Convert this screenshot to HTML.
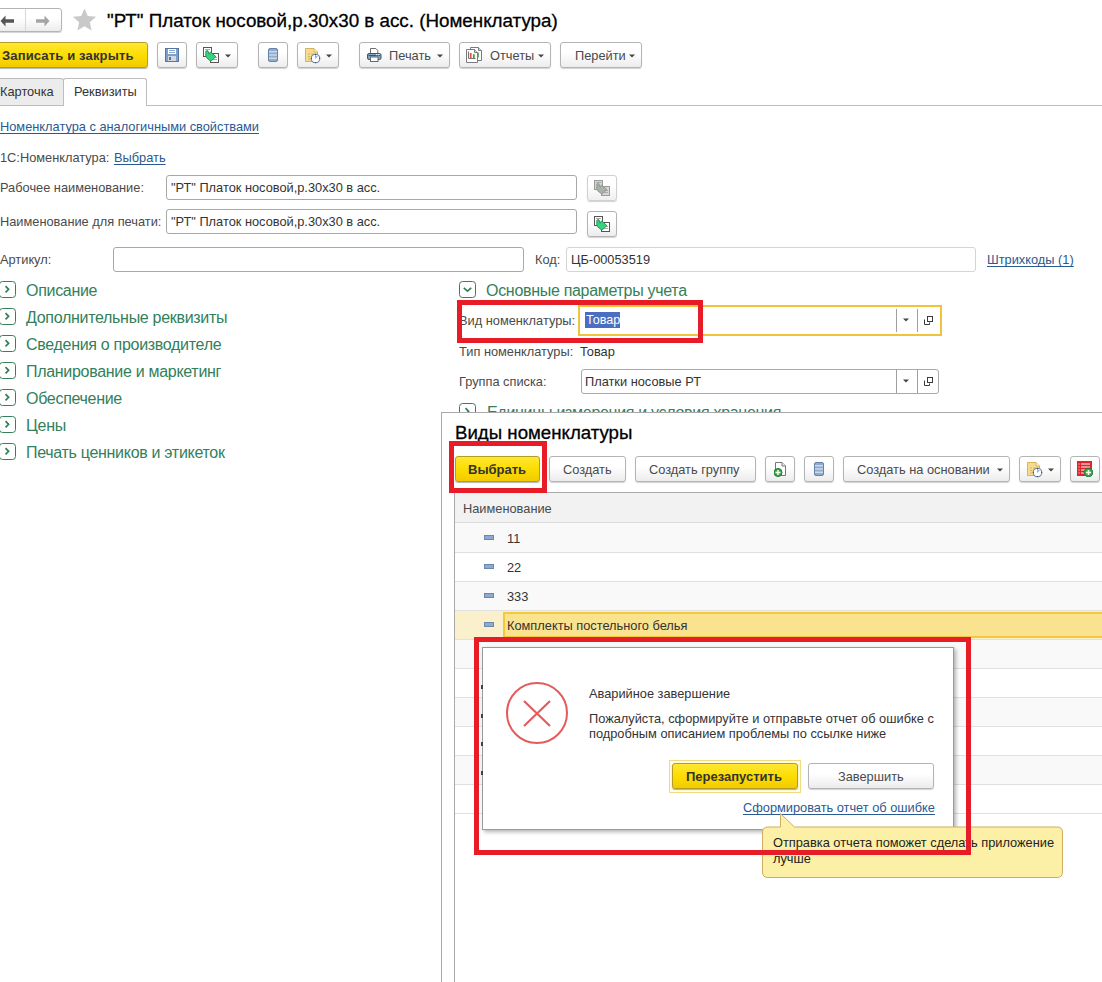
<!DOCTYPE html>
<html><head><meta charset="utf-8"><style>
html,body{margin:0;padding:0;width:1102px;height:982px;overflow:hidden;background:#fff;position:relative;font-family:"Liberation Sans", sans-serif;}
body>div,body>svg{position:absolute;}
.t{white-space:nowrap;}
</style></head><body>
<div style="left:-4px;top:8px;width:66px;height:24px;border:1px solid #b4b4b4;border-radius:3px;background:linear-gradient(#ffffff 40%,#ececec);box-shadow:0 1px 1px rgba(0,0,0,.18);box-sizing:border-box;"></div>
<div style="left:25px;top:9px;width:1px;height:22px;background:#d8d8d8;"></div>
<svg style="left:0px;top:15px" width="15" height="12" viewBox="0 0 15 12"><path d="M5.5 0.5L0.5 6L5.5 11.5V7.8H14V4.2H5.5Z" fill="#555"/></svg>
<svg style="left:36px;top:15px" width="15" height="12" viewBox="0 0 15 12"><path d="M8.5 0.5L13.5 6L8.5 11.5V7.8H0V4.2H8.5Z" fill="#a5a5a5"/></svg>
<svg style="left:73px;top:8px" width="24" height="23" viewBox="0 0 24 23"><path d="M11.50 0.40 L14.79 8.07 L23.10 8.83 L16.83 14.33 L18.67 22.47 L11.50 18.20 L4.33 22.47 L6.17 14.33 L-0.10 8.83 L8.21 8.07Z" fill="#c9c9c9"/></svg>
<div class="t" style="left:107px;top:12.09px;font-size:18.8px;line-height:18.8px;color:#000;font-weight:normal;-webkit-text-stroke:0.3px #000;">"РТ" Платок носовой,р.30х30 в асс. (Номенклатура)</div>
<div style="left:-4px;top:42px;width:152px;height:26px;border:1px solid #b59c22;border-radius:3px;background:linear-gradient(#ffe735,#fddd00 50%,#f2cb00);box-shadow:0 1px 1px rgba(0,0,0,.3);box-sizing:border-box;"></div>
<div class="t" style="left:2px;top:49.00px;font-size:13px;line-height:13px;color:#333;font-weight:bold;letter-spacing:0.15px;">Записать и закрыть</div>
<div style="left:157px;top:42px;width:30px;height:26px;border:1px solid #b4b4b4;border-radius:3px;background:linear-gradient(#ffffff 40%,#ececec);box-shadow:0 1px 1px rgba(0,0,0,.18);box-sizing:border-box;"></div>
<div style="left:196px;top:42px;width:42px;height:26px;border:1px solid #b4b4b4;border-radius:3px;background:linear-gradient(#ffffff 40%,#ececec);box-shadow:0 1px 1px rgba(0,0,0,.18);box-sizing:border-box;"></div>
<div style="left:258px;top:42px;width:30px;height:26px;border:1px solid #b4b4b4;border-radius:3px;background:linear-gradient(#ffffff 40%,#ececec);box-shadow:0 1px 1px rgba(0,0,0,.18);box-sizing:border-box;"></div>
<div style="left:297px;top:42px;width:42px;height:26px;border:1px solid #b4b4b4;border-radius:3px;background:linear-gradient(#ffffff 40%,#ececec);box-shadow:0 1px 1px rgba(0,0,0,.18);box-sizing:border-box;"></div>
<div style="left:359px;top:42px;width:91px;height:26px;border:1px solid #b4b4b4;border-radius:3px;background:linear-gradient(#ffffff 40%,#ececec);box-shadow:0 1px 1px rgba(0,0,0,.18);box-sizing:border-box;"></div>
<div style="left:459px;top:42px;width:92px;height:26px;border:1px solid #b4b4b4;border-radius:3px;background:linear-gradient(#ffffff 40%,#ececec);box-shadow:0 1px 1px rgba(0,0,0,.18);box-sizing:border-box;"></div>
<div style="left:560px;top:42px;width:82px;height:26px;border:1px solid #b4b4b4;border-radius:3px;background:linear-gradient(#ffffff 40%,#ececec);box-shadow:0 1px 1px rgba(0,0,0,.18);box-sizing:border-box;"></div>
<svg style="left:165px;top:48px" width="14" height="14" viewBox="0 0 14 14"><rect x="0.5" y="0.5" width="13" height="13" fill="#7d9fcd" stroke="#56769f"/><rect x="3" y="1" width="8" height="5" fill="#fff"/><path d="M4 2.5H10M4 4.5H10" stroke="#8aa8d0"/><rect x="3" y="8" width="8" height="5" fill="#d4d8de"/><rect x="4" y="9" width="2" height="3" fill="#56769f"/></svg>
<svg style="left:203px;top:47px" width="16" height="16" viewBox="0 0 16 16"><rect x="0.5" y="0.5" width="8" height="9" fill="#fff" stroke="#555"/><rect x="7.5" y="6.5" width="8" height="9" fill="#fff" stroke="#555"/><path d="M2 2.5H7M9 10.5H14M9 12.5H14" stroke="#aaa"/><path d="M2.8 4.2 Q3.5 3.3 4.9 3.8 L6.1 7.2 Q6.6 5.2 7.8 5.1 L12.9 9.6 L7.8 14.2 L3.4 10.6 Q2.6 9.6 2.8 8Z" fill="#38d27f" stroke="#1e8f4a" stroke-width="0.9"/></svg>
<svg style="left:225px;top:54px" width="6" height="4" viewBox="0 0 6 4"><path d="M0 0.5H6L3 3.5Z" fill="#444"/></svg>
<svg style="left:268px;top:48px" width="10" height="14" viewBox="0 0 10 14"><rect x="0.5" y="0.5" width="9" height="13" rx="1.5" fill="#8fabd0" stroke="#6782a8"/><path d="M1 3.8H9M1 7H9M1 10.2H9" stroke="#e8eef7" stroke-width="1"/></svg>
<svg style="left:305px;top:48px" width="16" height="16" viewBox="0 0 16 16"><path d="M0.5 0.5H9L12.5 4V13.5H0.5Z" fill="#f6dc90" stroke="#d6b45c"/><path d="M9 0.5V4H12.5" fill="#fff3cc" stroke="#d6b45c"/><path d="M3 6H5M6 6H9M3 8.5H5M3 11H5" stroke="#c9ab60" stroke-width="0.8"/><circle cx="10.5" cy="10.5" r="4.3" fill="#fff" stroke="#6a82a6" stroke-width="1.1"/><path d="M10.5 10.5V7.2L13 8.5Z" fill="#9fb4d6"/><path d="M10.5 10.5V7" stroke="#8aa0c4" stroke-width="0.8"/><circle cx="10.5" cy="6.4" r=".6" fill="#8a2a3a"/><circle cx="6.4" cy="10.5" r=".6" fill="#8a2a3a"/><circle cx="14.6" cy="10.5" r=".6" fill="#8a2a3a"/><circle cx="10.5" cy="14.6" r=".6" fill="#8a2a3a"/></svg>
<svg style="left:326px;top:54px" width="6" height="4" viewBox="0 0 6 4"><path d="M0 0.5H6L3 3.5Z" fill="#444"/></svg>
<svg style="left:367px;top:48px" width="15" height="15" viewBox="0 0 15 15"><path d="M3.5 0.5H8.8L10.8 2.5V5.5H3.5Z" fill="#fff" stroke="#6a6a6a"/><rect x="0.5" y="5.5" width="13.5" height="6" rx="1.5" fill="#7ea3c9" stroke="#3b5672"/><path d="M1.5 7.5H13" stroke="#3b5672"/><rect x="9" y="6.2" width="1.3" height="1" fill="#fff"/><rect x="11" y="6.2" width="1.3" height="1" fill="#fff"/><rect x="3.5" y="9" width="7.5" height="4.5" fill="#fff" stroke="#6a6a6a"/></svg>
<div class="t" style="left:389px;top:50.16px;font-size:12.8px;line-height:12.8px;color:#4a4a4a;font-weight:normal;">Печать</div>
<svg style="left:437px;top:54px" width="6" height="4" viewBox="0 0 6 4"><path d="M0 0.5H6L3 3.5Z" fill="#444"/></svg>
<svg style="left:466px;top:47px" width="17" height="17" viewBox="0 0 17 17"><path d="M4.5 0.5H12.5L15.5 3.5V13.5H4.5Z" fill="#fff" stroke="#7a7a80"/><path d="M12.5 0.5V3.5H15.5" fill="#ddd" stroke="#7a7a80"/><rect x="11.2" y="5.5" width="1.5" height="5" fill="#3f7f4f"/><path d="M0.5 2.5H8.5L11.5 5.5V15.5H0.5Z" fill="#fff" stroke="#7a7a80"/><path d="M8.5 2.5V5.5H11.5" fill="#ddd" stroke="#7a7a80"/><path d="M2.5 4.5V11.5H9.5" fill="none" stroke="#666" stroke-width="0.9"/><rect x="3.8" y="6" width="1.8" height="5.3" fill="#d9583a"/><rect x="6.9" y="7.2" width="1.8" height="4.1" fill="#4f9a4f"/></svg>
<div class="t" style="left:490px;top:50.16px;font-size:12.8px;line-height:12.8px;color:#4a4a4a;font-weight:normal;">Отчеты</div>
<svg style="left:538px;top:54px" width="6" height="4" viewBox="0 0 6 4"><path d="M0 0.5H6L3 3.5Z" fill="#444"/></svg>
<div class="t" style="left:575px;top:50.16px;font-size:12.8px;line-height:12.8px;color:#4a4a4a;font-weight:normal;">Перейти</div>
<svg style="left:629px;top:54px" width="6" height="4" viewBox="0 0 6 4"><path d="M0 0.5H6L3 3.5Z" fill="#444"/></svg>
<div style="left:-4px;top:78px;width:68px;height:28px;background:#ececec;border:1px solid #bdbdbd;border-bottom:none;border-radius:3px 3px 0 0;box-sizing:border-box;"></div>
<div style="left:63px;top:78px;width:84px;height:28px;background:#fff;border:1px solid #bdbdbd;border-bottom:none;border-radius:3px 3px 0 0;box-sizing:border-box;"></div>
<div style="left:-4px;top:105px;width:68px;height:1px;background:#bdbdbd;"></div>
<div style="left:146px;top:105px;width:956px;height:1px;background:#bdbdbd;"></div>
<div class="t" style="left:0px;top:86.16px;font-size:12.8px;line-height:12.8px;color:#333;font-weight:normal;">Карточка</div>
<div class="t" style="left:74px;top:86.16px;font-size:12.8px;line-height:12.8px;color:#333;font-weight:normal;">Реквизиты</div>
<div class="t" style="left:0px;top:121.16px;font-size:12.8px;line-height:12.8px;color:#2a5a91;font-weight:normal;text-decoration:underline;text-underline-offset:2px;">Номенклатура с аналогичными свойствами</div>
<div class="t" style="left:0px;top:152.16px;font-size:12.8px;line-height:12.8px;color:#4a4a4a;font-weight:normal;">1С:Номенклатура:</div>
<div class="t" style="left:114px;top:152.16px;font-size:12.8px;line-height:12.8px;color:#2a5a91;font-weight:normal;text-decoration:underline;text-underline-offset:2px;">Выбрать</div>
<div class="t" style="left:0px;top:182.16px;font-size:12.8px;line-height:12.8px;color:#4a4a4a;font-weight:normal;">Рабочее наименование:</div>
<div class="t" style="left:0px;top:216.16px;font-size:12.8px;line-height:12.8px;color:#4a4a4a;font-weight:normal;">Наименование для печати:</div>
<div class="t" style="left:0px;top:254.16px;font-size:12.8px;line-height:12.8px;color:#4a4a4a;font-weight:normal;">Артикул:</div>
<div style="left:166px;top:175px;width:411px;height:25px;border:1px solid #a8a8a8;border-radius:3px;background:#fff;box-sizing:border-box;"></div>
<div style="left:166px;top:209px;width:411px;height:25px;border:1px solid #a8a8a8;border-radius:3px;background:#fff;box-sizing:border-box;"></div>
<div class="t" style="left:171px;top:182.16px;font-size:12.8px;line-height:12.8px;color:#333;font-weight:normal;">"РТ" Платок носовой,р.30х30 в асс.</div>
<div class="t" style="left:171px;top:216.16px;font-size:12.8px;line-height:12.8px;color:#333;font-weight:normal;">"РТ" Платок носовой,р.30х30 в асс.</div>
<div style="left:587px;top:175px;width:30px;height:26px;border:1px solid #d0d0d0;border-radius:3px;background:linear-gradient(#ffffff 40%,#efefef);box-shadow:0 1px 1px rgba(0,0,0,.18);box-sizing:border-box;"></div>
<svg style="left:594px;top:180px" width="16" height="16" viewBox="0 0 16 16"><rect x="0.5" y="0.5" width="8" height="9" fill="#d6d6d6" stroke="#9a9a9a"/><rect x="7.5" y="6.5" width="8" height="9" fill="#d6d6d6" stroke="#9a9a9a"/><path d="M2 2.5H7M9 10.5H14M9 12.5H14" stroke="#aaa"/><path d="M2.8 4.2 Q3.5 3.3 4.9 3.8 L6.1 7.2 Q6.6 5.2 7.8 5.1 L12.9 9.6 L7.8 14.2 L3.4 10.6 Q2.6 9.6 2.8 8Z" fill="#a9b1ab" stroke="#8a948c" stroke-width="0.9"/></svg>
<div style="left:587px;top:211px;width:30px;height:26px;border:1px solid #b4b4b4;border-radius:3px;background:linear-gradient(#ffffff 40%,#ececec);box-shadow:0 1px 1px rgba(0,0,0,.18);box-sizing:border-box;"></div>
<svg style="left:594px;top:216px" width="16" height="16" viewBox="0 0 16 16"><rect x="0.5" y="0.5" width="8" height="9" fill="#fff" stroke="#555"/><rect x="7.5" y="6.5" width="8" height="9" fill="#fff" stroke="#555"/><path d="M2 2.5H7M9 10.5H14M9 12.5H14" stroke="#aaa"/><path d="M2.8 4.2 Q3.5 3.3 4.9 3.8 L6.1 7.2 Q6.6 5.2 7.8 5.1 L12.9 9.6 L7.8 14.2 L3.4 10.6 Q2.6 9.6 2.8 8Z" fill="#38d27f" stroke="#1e8f4a" stroke-width="0.9"/></svg>
<div style="left:113px;top:247px;width:411px;height:25px;border:1px solid #a8a8a8;border-radius:3px;background:#fff;box-sizing:border-box;"></div>
<div class="t" style="left:535px;top:254.16px;font-size:12.8px;line-height:12.8px;color:#4a4a4a;font-weight:normal;">Код:</div>
<div style="left:566px;top:247px;width:410px;height:25px;border:1px solid #d4d4d4;border-radius:3px;background:#fff;box-sizing:border-box;"></div>
<div class="t" style="left:571px;top:254.16px;font-size:12.8px;line-height:12.8px;color:#333;font-weight:normal;">ЦБ-00053519</div>
<div class="t" style="left:987px;top:254.16px;font-size:12.8px;line-height:12.8px;color:#2a5a91;font-weight:normal;text-decoration:underline;text-underline-offset:2px;">Штрихкоды (1)</div>
<svg style="left:-1px;top:281px" width="17" height="17" viewBox="0 0 17 17"><rect x="0.5" y="0.5" width="16" height="16" rx="3" fill="none" stroke="#33805a"/><path d="M6.5 5.2L9.6 8.3L6.5 11.4" fill="none" stroke="#33805a" stroke-width="1.7"/></svg>
<div class="t" style="left:26px;top:283.46px;font-size:16px;line-height:16px;color:#33805a;font-weight:normal;letter-spacing:-0.3px;">Описание</div>
<svg style="left:-1px;top:308px" width="17" height="17" viewBox="0 0 17 17"><rect x="0.5" y="0.5" width="16" height="16" rx="3" fill="none" stroke="#33805a"/><path d="M6.5 5.2L9.6 8.3L6.5 11.4" fill="none" stroke="#33805a" stroke-width="1.7"/></svg>
<div class="t" style="left:26px;top:310.46px;font-size:16px;line-height:16px;color:#33805a;font-weight:normal;letter-spacing:-0.3px;">Дополнительные реквизиты</div>
<svg style="left:-1px;top:335px" width="17" height="17" viewBox="0 0 17 17"><rect x="0.5" y="0.5" width="16" height="16" rx="3" fill="none" stroke="#33805a"/><path d="M6.5 5.2L9.6 8.3L6.5 11.4" fill="none" stroke="#33805a" stroke-width="1.7"/></svg>
<div class="t" style="left:26px;top:337.46px;font-size:16px;line-height:16px;color:#33805a;font-weight:normal;letter-spacing:-0.3px;">Сведения о производителе</div>
<svg style="left:-1px;top:362px" width="17" height="17" viewBox="0 0 17 17"><rect x="0.5" y="0.5" width="16" height="16" rx="3" fill="none" stroke="#33805a"/><path d="M6.5 5.2L9.6 8.3L6.5 11.4" fill="none" stroke="#33805a" stroke-width="1.7"/></svg>
<div class="t" style="left:26px;top:364.46px;font-size:16px;line-height:16px;color:#33805a;font-weight:normal;letter-spacing:-0.3px;">Планирование и маркетинг</div>
<svg style="left:-1px;top:389px" width="17" height="17" viewBox="0 0 17 17"><rect x="0.5" y="0.5" width="16" height="16" rx="3" fill="none" stroke="#33805a"/><path d="M6.5 5.2L9.6 8.3L6.5 11.4" fill="none" stroke="#33805a" stroke-width="1.7"/></svg>
<div class="t" style="left:26px;top:391.46px;font-size:16px;line-height:16px;color:#33805a;font-weight:normal;letter-spacing:-0.3px;">Обеспечение</div>
<svg style="left:-1px;top:416px" width="17" height="17" viewBox="0 0 17 17"><rect x="0.5" y="0.5" width="16" height="16" rx="3" fill="none" stroke="#33805a"/><path d="M6.5 5.2L9.6 8.3L6.5 11.4" fill="none" stroke="#33805a" stroke-width="1.7"/></svg>
<div class="t" style="left:26px;top:418.46px;font-size:16px;line-height:16px;color:#33805a;font-weight:normal;letter-spacing:-0.3px;">Цены</div>
<svg style="left:-1px;top:443px" width="17" height="17" viewBox="0 0 17 17"><rect x="0.5" y="0.5" width="16" height="16" rx="3" fill="none" stroke="#33805a"/><path d="M6.5 5.2L9.6 8.3L6.5 11.4" fill="none" stroke="#33805a" stroke-width="1.7"/></svg>
<div class="t" style="left:26px;top:445.46px;font-size:16px;line-height:16px;color:#33805a;font-weight:normal;letter-spacing:-0.3px;">Печать ценников и этикеток</div>
<svg style="left:459px;top:281px" width="17" height="17" viewBox="0 0 17 17"><rect x="0.5" y="0.5" width="16" height="16" rx="3" fill="none" stroke="#33805a"/><path d="M4.8 6.8L8.5 10.2L12.2 6.8" fill="none" stroke="#33805a" stroke-width="1.7"/></svg>
<div class="t" style="left:486px;top:283.46px;font-size:16px;line-height:16px;color:#33805a;font-weight:normal;letter-spacing:-0.3px;">Основные параметры учета</div>
<div class="t" style="left:459px;top:315.16px;font-size:12.8px;line-height:12.8px;color:#4a4a4a;font-weight:normal;">Вид номенклатуры:</div>
<div style="left:578px;top:305px;width:364px;height:31px;border:2px solid #f0c43a;background:#fff;box-sizing:border-box;"></div>
<div style="left:585px;top:312px;width:35px;height:16px;background:#4a6ec0;"></div>
<div class="t" style="left:586px;top:314.33px;font-size:12.6px;line-height:12.6px;color:#fff;font-weight:normal;">Товар</div>
<div style="left:896px;top:309px;width:1px;height:23px;background:#a0a0a0;"></div>
<div style="left:917px;top:309px;width:1px;height:23px;background:#a0a0a0;"></div>
<svg style="left:903px;top:318px" width="6" height="4" viewBox="0 0 6 4"><path d="M0 0.5H6L3 3.5Z" fill="#444"/></svg>
<svg style="left:924px;top:316px" width="10" height="10" viewBox="0 0 10 10"><path d="M0.5 3.5V8.5H5.5V6.5" fill="none" stroke="#3a3a3a"/><rect x="3.5" y="0.5" width="5" height="5" fill="#fff" stroke="#3a3a3a"/></svg>
<div class="t" style="left:459px;top:346.16px;font-size:12.8px;line-height:12.8px;color:#4a4a4a;font-weight:normal;">Тип номенклатуры:</div>
<div class="t" style="left:580px;top:346.16px;font-size:12.8px;line-height:12.8px;color:#333;font-weight:normal;">Товар</div>
<div class="t" style="left:459px;top:376.16px;font-size:12.8px;line-height:12.8px;color:#4a4a4a;font-weight:normal;">Группа списка:</div>
<div style="left:581px;top:369px;width:358px;height:25px;border:1px solid #a8a8a8;border-radius:3px;background:#fff;box-sizing:border-box;"></div>
<div style="left:896px;top:370px;width:1px;height:23px;background:#a0a0a0;"></div>
<div style="left:917px;top:370px;width:1px;height:23px;background:#a0a0a0;"></div>
<svg style="left:903px;top:379px" width="6" height="4" viewBox="0 0 6 4"><path d="M0 0.5H6L3 3.5Z" fill="#444"/></svg>
<svg style="left:924px;top:377px" width="10" height="10" viewBox="0 0 10 10"><path d="M0.5 3.5V8.5H5.5V6.5" fill="none" stroke="#3a3a3a"/><rect x="3.5" y="0.5" width="5" height="5" fill="#fff" stroke="#3a3a3a"/></svg>
<div class="t" style="left:585px;top:376.16px;font-size:12.8px;line-height:12.8px;color:#333;font-weight:normal;">Платки носовые РТ</div>
<svg style="left:459px;top:403px" width="17" height="17" viewBox="0 0 17 17"><rect x="0.5" y="0.5" width="16" height="16" rx="3" fill="none" stroke="#33805a"/><path d="M6.5 5.2L9.6 8.3L6.5 11.4" fill="none" stroke="#33805a" stroke-width="1.7"/></svg>
<div class="t" style="left:487px;top:405.46px;font-size:16px;line-height:16px;color:#33805a;font-weight:normal;letter-spacing:-0.3px;">Единицы измерения и условия хранения</div>
<div style="left:441px;top:412px;width:700px;height:600px;background:#fff;border:1px solid #a9a9a9;box-sizing:border-box;"></div>
<div class="t" style="left:455px;top:424.20px;font-size:18.67px;line-height:18.67px;color:#000;font-weight:normal;-webkit-text-stroke:0.3px #000;">Виды номенклатуры</div>
<div style="left:455px;top:456px;width:85px;height:26px;border:1px solid #b59c22;border-radius:3px;background:linear-gradient(#ffe735,#fddd00 50%,#f2cb00);box-shadow:0 1px 1px rgba(0,0,0,.3);box-sizing:border-box;"></div>
<div class="t" style="left:468px;top:462.60px;font-size:13px;line-height:13px;color:#333;font-weight:bold;">Выбрать</div>
<div style="left:549px;top:456px;width:77px;height:26px;border:1px solid #b4b4b4;border-radius:3px;background:linear-gradient(#ffffff 40%,#ececec);box-shadow:0 1px 1px rgba(0,0,0,.18);box-sizing:border-box;"></div>
<div style="left:635px;top:456px;width:121px;height:26px;border:1px solid #b4b4b4;border-radius:3px;background:linear-gradient(#ffffff 40%,#ececec);box-shadow:0 1px 1px rgba(0,0,0,.18);box-sizing:border-box;"></div>
<div style="left:765px;top:456px;width:30px;height:26px;border:1px solid #b4b4b4;border-radius:3px;background:linear-gradient(#ffffff 40%,#ececec);box-shadow:0 1px 1px rgba(0,0,0,.18);box-sizing:border-box;"></div>
<div style="left:804px;top:456px;width:30px;height:26px;border:1px solid #b4b4b4;border-radius:3px;background:linear-gradient(#ffffff 40%,#ececec);box-shadow:0 1px 1px rgba(0,0,0,.18);box-sizing:border-box;"></div>
<div style="left:843px;top:456px;width:167px;height:26px;border:1px solid #b4b4b4;border-radius:3px;background:linear-gradient(#ffffff 40%,#ececec);box-shadow:0 1px 1px rgba(0,0,0,.18);box-sizing:border-box;"></div>
<div style="left:1019px;top:456px;width:42px;height:26px;border:1px solid #b4b4b4;border-radius:3px;background:linear-gradient(#ffffff 40%,#ececec);box-shadow:0 1px 1px rgba(0,0,0,.18);box-sizing:border-box;"></div>
<div style="left:1070px;top:456px;width:30px;height:26px;border:1px solid #b4b4b4;border-radius:3px;background:linear-gradient(#ffffff 40%,#ececec);box-shadow:0 1px 1px rgba(0,0,0,.18);box-sizing:border-box;"></div>
<div class="t" style="left:563px;top:464.16px;font-size:12.8px;line-height:12.8px;color:#4a4a4a;font-weight:normal;">Создать</div>
<div class="t" style="left:649px;top:464.16px;font-size:12.8px;line-height:12.8px;color:#4a4a4a;font-weight:normal;">Создать группу</div>
<svg style="left:774px;top:462px" width="13" height="15" viewBox="0 0 13 15"><path d="M1.5 0.5H8L11.5 4V13.5H1.5Z" fill="#fff" stroke="#777"/><path d="M8 0.5V4H11.5" fill="#eee" stroke="#777"/><circle cx="4" cy="10.5" r="4" fill="#3aa548" stroke="#1f7a2e"/><path d="M4 8V13M1.5 10.5H6.5" stroke="#fff" stroke-width="1.4"/></svg>
<svg style="left:814px;top:462px" width="10" height="14" viewBox="0 0 10 14"><rect x="0.5" y="0.5" width="9" height="13" rx="1.5" fill="#8fabd0" stroke="#6782a8"/><path d="M1 3.8H9M1 7H9M1 10.2H9" stroke="#e8eef7" stroke-width="1"/></svg>
<div class="t" style="left:857px;top:464.16px;font-size:12.8px;line-height:12.8px;color:#4a4a4a;font-weight:normal;">Создать на основании</div>
<svg style="left:997px;top:468px" width="6" height="4" viewBox="0 0 6 4"><path d="M0 0.5H6L3 3.5Z" fill="#444"/></svg>
<svg style="left:1027px;top:462px" width="16" height="16" viewBox="0 0 16 16"><path d="M0.5 0.5H9L12.5 4V13.5H0.5Z" fill="#f6dc90" stroke="#d6b45c"/><path d="M9 0.5V4H12.5" fill="#fff3cc" stroke="#d6b45c"/><path d="M3 6H5M6 6H9M3 8.5H5M3 11H5" stroke="#c9ab60" stroke-width="0.8"/><circle cx="10.5" cy="10.5" r="4.3" fill="#fff" stroke="#6a82a6" stroke-width="1.1"/><path d="M10.5 10.5V7.2L13 8.5Z" fill="#9fb4d6"/><path d="M10.5 10.5V7" stroke="#8aa0c4" stroke-width="0.8"/><circle cx="10.5" cy="6.4" r=".6" fill="#8a2a3a"/><circle cx="6.4" cy="10.5" r=".6" fill="#8a2a3a"/><circle cx="14.6" cy="10.5" r=".6" fill="#8a2a3a"/><circle cx="10.5" cy="14.6" r=".6" fill="#8a2a3a"/></svg>
<svg style="left:1048px;top:468px" width="6" height="4" viewBox="0 0 6 4"><path d="M0 0.5H6L3 3.5Z" fill="#444"/></svg>
<svg style="left:1077px;top:461px" width="16" height="16" viewBox="0 0 16 16"><rect x="0" y="0" width="15" height="15" fill="#e0242a"/><path d="M4 3H13M4 6H13M4 9H8M4 12H8" stroke="#fff" stroke-width="1.2"/><path d="M1.5 3H2.5M1.5 6H2.5M1.5 9H2.5M1.5 12H2.5" stroke="#fff" stroke-width="1"/><circle cx="11.5" cy="11.5" r="4.3" fill="#38a84a" stroke="#1e7d30"/><path d="M11.5 9V14M9 11.5H14" stroke="#fff" stroke-width="1.5"/></svg>
<div style="left:454px;top:492px;width:700px;height:500px;border-left:1px solid #a9a9a9;border-top:1px solid #a9a9a9;box-sizing:border-box;"></div>
<div style="left:455px;top:493px;width:700px;height:30px;background:#f2f2f2;border-bottom:1px solid #dcdcdc;box-sizing:border-box;"></div>
<div class="t" style="left:463px;top:503.16px;font-size:12.8px;line-height:12.8px;color:#4a4a4a;font-weight:normal;">Наименование</div>
<div style="left:455px;top:523px;width:700px;height:30px;background:#f9f9f9;"></div>
<div style="left:455px;top:552px;width:700px;height:30px;background:#fff;"></div>
<div style="left:455px;top:581px;width:700px;height:30px;background:#f9f9f9;"></div>
<div style="left:455px;top:610px;width:700px;height:30px;background:#fbf0cc;"></div>
<div style="left:455px;top:639px;width:700px;height:30px;background:#f9f9f9;"></div>
<div style="left:455px;top:668px;width:700px;height:30px;background:#fff;"></div>
<div style="left:455px;top:697px;width:700px;height:30px;background:#f9f9f9;"></div>
<div style="left:455px;top:726px;width:700px;height:30px;background:#fff;"></div>
<div style="left:455px;top:755px;width:700px;height:30px;background:#f9f9f9;"></div>
<div style="left:455px;top:784px;width:700px;height:30px;background:#fff;"></div>
<div style="left:455px;top:552px;width:700px;height:1px;background:#e0e0e0;"></div>
<div style="left:455px;top:581px;width:700px;height:1px;background:#e0e0e0;"></div>
<div style="left:455px;top:610px;width:700px;height:1px;background:#e0e0e0;"></div>
<div style="left:455px;top:639px;width:700px;height:1px;background:#e0e0e0;"></div>
<div style="left:455px;top:668px;width:700px;height:1px;background:#e0e0e0;"></div>
<div style="left:455px;top:697px;width:700px;height:1px;background:#e0e0e0;"></div>
<div style="left:455px;top:726px;width:700px;height:1px;background:#e0e0e0;"></div>
<div style="left:455px;top:755px;width:700px;height:1px;background:#e0e0e0;"></div>
<div style="left:455px;top:784px;width:700px;height:1px;background:#e0e0e0;"></div>
<div style="left:455px;top:813px;width:700px;height:1px;background:#e0e0e0;"></div>
<div style="left:484px;top:535px;width:10px;height:5px;background:#8eaad0;border:1px solid #6b87ad;box-sizing:border-box;"></div>
<div class="t" style="left:507px;top:533.16px;font-size:12.8px;line-height:12.8px;color:#333;font-weight:normal;">11</div>
<div style="left:484px;top:564px;width:10px;height:5px;background:#8eaad0;border:1px solid #6b87ad;box-sizing:border-box;"></div>
<div class="t" style="left:507px;top:562.16px;font-size:12.8px;line-height:12.8px;color:#333;font-weight:normal;">22</div>
<div style="left:484px;top:593px;width:10px;height:5px;background:#8eaad0;border:1px solid #6b87ad;box-sizing:border-box;"></div>
<div class="t" style="left:507px;top:591.16px;font-size:12.8px;line-height:12.8px;color:#333;font-weight:normal;">333</div>
<div style="left:484px;top:622px;width:10px;height:5px;background:#8eaad0;border:1px solid #6b87ad;box-sizing:border-box;"></div>
<div style="left:503px;top:612px;width:700px;height:26px;background:#fae38f;border-top:2px solid #f4c83c;border-bottom:2px solid #f4c83c;border-left:2px solid #f4c83c;box-sizing:border-box;"></div>
<div class="t" style="left:507px;top:620.16px;font-size:12.8px;line-height:12.8px;color:#333;font-weight:normal;">Комплекты постельного белья</div>
<div style="left:482px;top:647px;width:472px;height:183px;background:#fff;border:1px solid #9a9a9a;box-shadow:2px 2px 4px rgba(0,0,0,.3);box-sizing:border-box;"></div>
<div style="left:481px;top:685px;width:1.5px;height:4px;background:#4a3a4a;"></div>
<div style="left:481px;top:714px;width:1.5px;height:4px;background:#4a3a4a;"></div>
<div style="left:481px;top:742px;width:1.5px;height:4px;background:#4a3a4a;"></div>
<div style="left:481px;top:771px;width:1.5px;height:4px;background:#4a3a4a;"></div>
<svg style="left:505px;top:681px" width="64" height="64" viewBox="0 0 64 64"><circle cx="32" cy="32" r="30" fill="none" stroke="#e25c5c" stroke-width="2"/><path d="M19 20L45 45M45 20L19 45" stroke="#e25c5c" stroke-width="2.2"/></svg>
<div class="t" style="left:589px;top:688.16px;font-size:12.8px;line-height:12.8px;color:#333;font-weight:normal;">Аварийное завершение</div>
<div class="t" style="left:589px;top:713.16px;font-size:12.8px;line-height:12.8px;color:#333;font-weight:normal;">Пожалуйста, сформируйте и отправьте отчет об ошибке с</div>
<div class="t" style="left:589px;top:728.16px;font-size:12.8px;line-height:12.8px;color:#333;font-weight:normal;">подробным описанием проблемы по ссылке ниже</div>
<div style="left:669px;top:760px;width:132px;height:33px;border:1px solid #f0dc80;background:#fffbe6;box-sizing:border-box;"></div>
<div style="left:672px;top:763px;width:126px;height:26px;border:1px solid #b59c22;border-radius:3px;background:linear-gradient(#ffe735,#fddd00 50%,#f2cb00);box-shadow:0 1px 1px rgba(0,0,0,.3);box-sizing:border-box;"></div>
<div class="t" style="left:686px;top:769.60px;font-size:13px;line-height:13px;color:#333;font-weight:bold;">Перезапустить</div>
<div style="left:808px;top:763px;width:126px;height:26px;border:1px solid #b4b4b4;border-radius:3px;background:linear-gradient(#ffffff 40%,#ececec);box-shadow:0 1px 1px rgba(0,0,0,.18);box-sizing:border-box;"></div>
<div class="t" style="left:838px;top:771.16px;font-size:12.8px;line-height:12.8px;color:#4a4a4a;font-weight:normal;">Завершить</div>
<div class="t" style="left:743px;top:802.16px;font-size:12.8px;line-height:12.8px;color:#2a5a91;font-weight:normal;text-decoration:underline;text-underline-offset:2px;">Сформировать отчет об ошибке</div>
<svg style="left:760px;top:810px" width="306" height="70" viewBox="0 0 306 70"><path d="M20.5 17 L20.5 3.5 L34.5 17 L297 17 Q302.5 17 302.5 22 L302.5 62 Q302.5 67.5 297 67.5 L8 67.5 Q2.5 67.5 2.5 62 L2.5 22 Q2.5 17 8 17 Z" fill="#fcefa6" stroke="#cfae62" stroke-width="1"/></svg>
<div class="t" style="left:773px;top:837.16px;font-size:12.8px;line-height:12.8px;color:#222;font-weight:normal;">Отправка отчета поможет сделать приложение</div>
<div class="t" style="left:773px;top:853.16px;font-size:12.8px;line-height:12.8px;color:#222;font-weight:normal;">лучше</div>
<div style="left:457px;top:300px;width:246px;height:43px;border:5px solid #e81c27;box-sizing:border-box;"></div>
<div style="left:449px;top:441px;width:98px;height:52px;border:5px solid #e81c27;box-sizing:border-box;"></div>
<div style="left:474px;top:637px;width:497px;height:218px;border:5px solid #e81c27;box-sizing:border-box;"></div>
</body></html>
